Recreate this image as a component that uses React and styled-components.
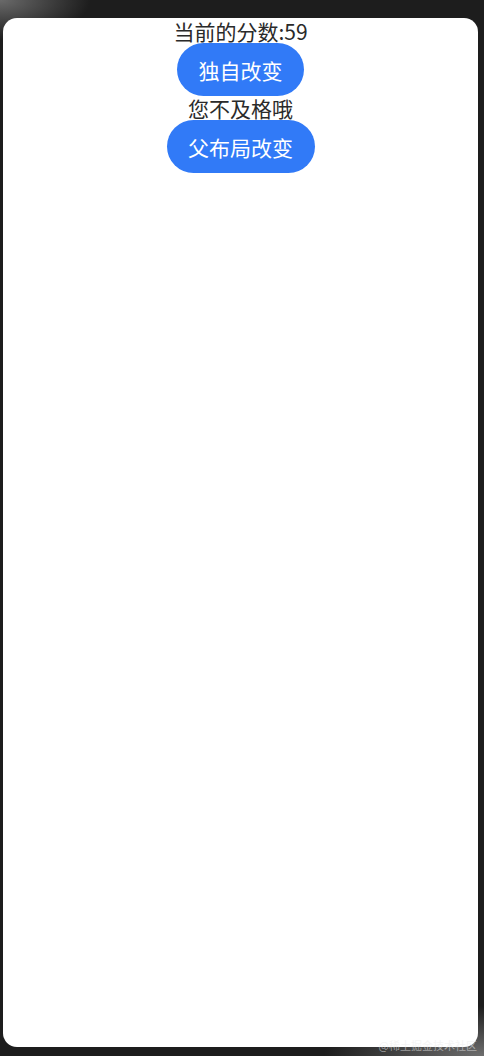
import React, { useState } from 'react'
import styled, { createGlobalStyle } from 'styled-components';

const GlobalStyle = createGlobalStyle`
html, body {
  margin: 0;
  padding: 0;
  background: #1d1d1d;
}
* {
  box-sizing: border-box;
}
`;

const Frame = styled.div`
position: relative;
width: 484px;
height: 1056px;
padding: 18px 6px 9px 3px;
background:
  radial-gradient(ellipse 90px 40px at 0 0, #6a6a6a, rgba(29,29,29,0) 100%),
  radial-gradient(ellipse 160px 50px at 100% 100%, #6e6e6e, rgba(29,29,29,0) 100%),
  #1d1d1d;
`;

const Screen = styled.div`
display: flex;
flex-direction: column;
align-items: center;
height: 100%;
background-color: #fff;
border-radius: 14px;
padding-top: 1px;
font-family: 'Noto Sans CJK SC', 'Noto Sans', sans-serif;
`;

const Label = styled.p`
margin: 0;
font-size: 21px;
line-height: 24px;
color: #2a2a2a;
`;

const Button = styled.button`
height: 53px;
padding: 0 21.5px;
border: none;
border-radius: 27px;
background-color: #317af7;
color: #fff;
font-family: inherit;
font-size: 21px;
line-height: 24px;
cursor: pointer;
`;

const Watermark = styled.span`
position: absolute;
right: 7px;
bottom: 3px;
font-family: 'Noto Sans CJK SC', sans-serif;
font-size: 11px;
color: rgba(235,235,235,0.55);
`;

export default function App() {
  const [score, setScore] = useState(59);
  return (
    <>
      <GlobalStyle />
      <Frame>
        <Screen>
          <Label>当前的分数:{score}</Label>
          <Button onClick={() => setScore(score + 1)}>独自改变</Button>
          <Label>{score >= 60 ? '您及格了' : '您不及格哦'}</Label>
          <Button onClick={() => setScore(score + 1)}>父布局改变</Button>
        </Screen>
        <Watermark>@稀土掘金技术社区</Watermark>
      </Frame>
    </>
  )
}
